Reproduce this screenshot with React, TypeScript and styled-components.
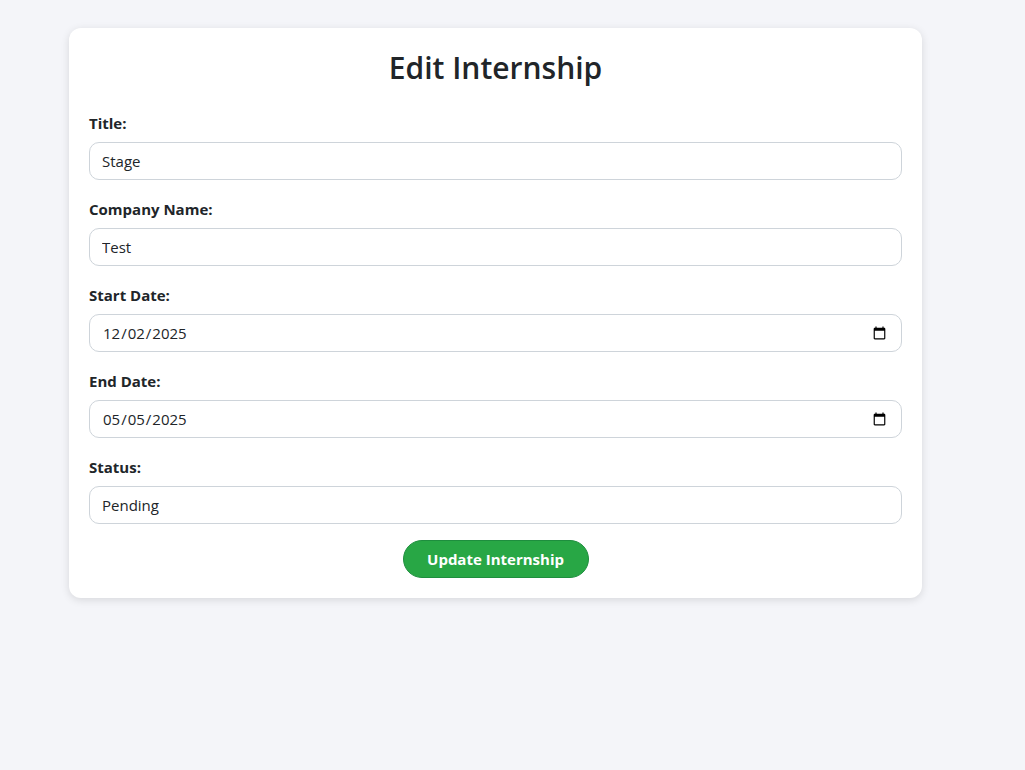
import React, { useState } from "react";
import styled, { createGlobalStyle } from "styled-components";

const GlobalStyle = createGlobalStyle`
  html, body {
    margin: 0;
    padding: 0;
    background: #f4f5f9;
    font-family: "Open Sans", "Noto Sans", sans-serif;
    color: #212529;
  }
`;

const App: React.FC = () => {
  const [form, setForm] = useState({
    title: "Stage",
    company: "Test",
    start: "2025-12-02",
    end: "2025-05-05",
    status: "Pending",
  });

  const update = (key: keyof typeof form) => (e: React.ChangeEvent<HTMLInputElement>) =>
    setForm({ ...form, [key]: e.target.value });

  return (
    <Page>
      <GlobalStyle />
      <Card>
        <Heading>Edit Internship</Heading>
        <Form onSubmit={(e) => e.preventDefault()}>
          <Field>
            <Label>Title:</Label>
            <Input type="text" value={form.title} onChange={update("title")} />
          </Field>
          <Field>
            <Label>Company Name:</Label>
            <Input type="text" value={form.company} onChange={update("company")} />
          </Field>
          <Field>
            <Label>Start Date:</Label>
            <Input type="date" value={form.start} onChange={update("start")} />
          </Field>
          <Field>
            <Label>End Date:</Label>
            <Input type="date" value={form.end} onChange={update("end")} />
          </Field>
          <Field>
            <Label>Status:</Label>
            <Input type="text" value={form.status} onChange={update("status")} />
          </Field>
          <SubmitButton type="submit">Update Internship</SubmitButton>
        </Form>
      </Card>
    </Page>
  );
};

export default App;

const Page = styled.div`
  min-height: 770px;
  padding: 28px 0 0 69px;
  box-sizing: border-box;
`;

const Card = styled.div`
  width: 853px;
  box-sizing: border-box;
  background: white;
  border-radius: 12px;
  padding: 20px;
  box-shadow: 0 2px 8px rgba(0, 0, 0, 0.12);
`;

const Heading = styled.h2`
  margin: 0 0 25px;
  text-align: center;
  font-size: 30px;
  font-weight: 600;
  line-height: 40px;
  color: #212529;
`;

const Form = styled.form`
  display: flex;
  flex-direction: column;
`;

const Field = styled.div`
  display: flex;
  flex-direction: column;
  & + & {
    margin-top: 19px;
  }
`;

const Label = styled.label`
  font-size: 15px;
  font-weight: 700;
  line-height: 20px;
  margin-bottom: 9px;
  color: #212529;
`;

const Input = styled.input`
  height: 38px;
  box-sizing: border-box;
  padding: 0 12px;
  border: 1px solid #ced4da;
  border-radius: 10px;
  font-family: "Open Sans", "Noto Sans", sans-serif;
  font-size: 15px;
  color: #212529;
  background: white;
  outline: none;
`;

const SubmitButton = styled.button`
  align-self: center;
  margin-top: 16px;
  width: 186px;
  height: 38px;
  border: 1px solid #1e8e3e;
  border-radius: 20px;
  background: #28a745;
  color: white;
  font-family: "Open Sans", "Noto Sans", sans-serif;
  font-size: 15px;
  font-weight: 700;
  cursor: pointer;
`;
